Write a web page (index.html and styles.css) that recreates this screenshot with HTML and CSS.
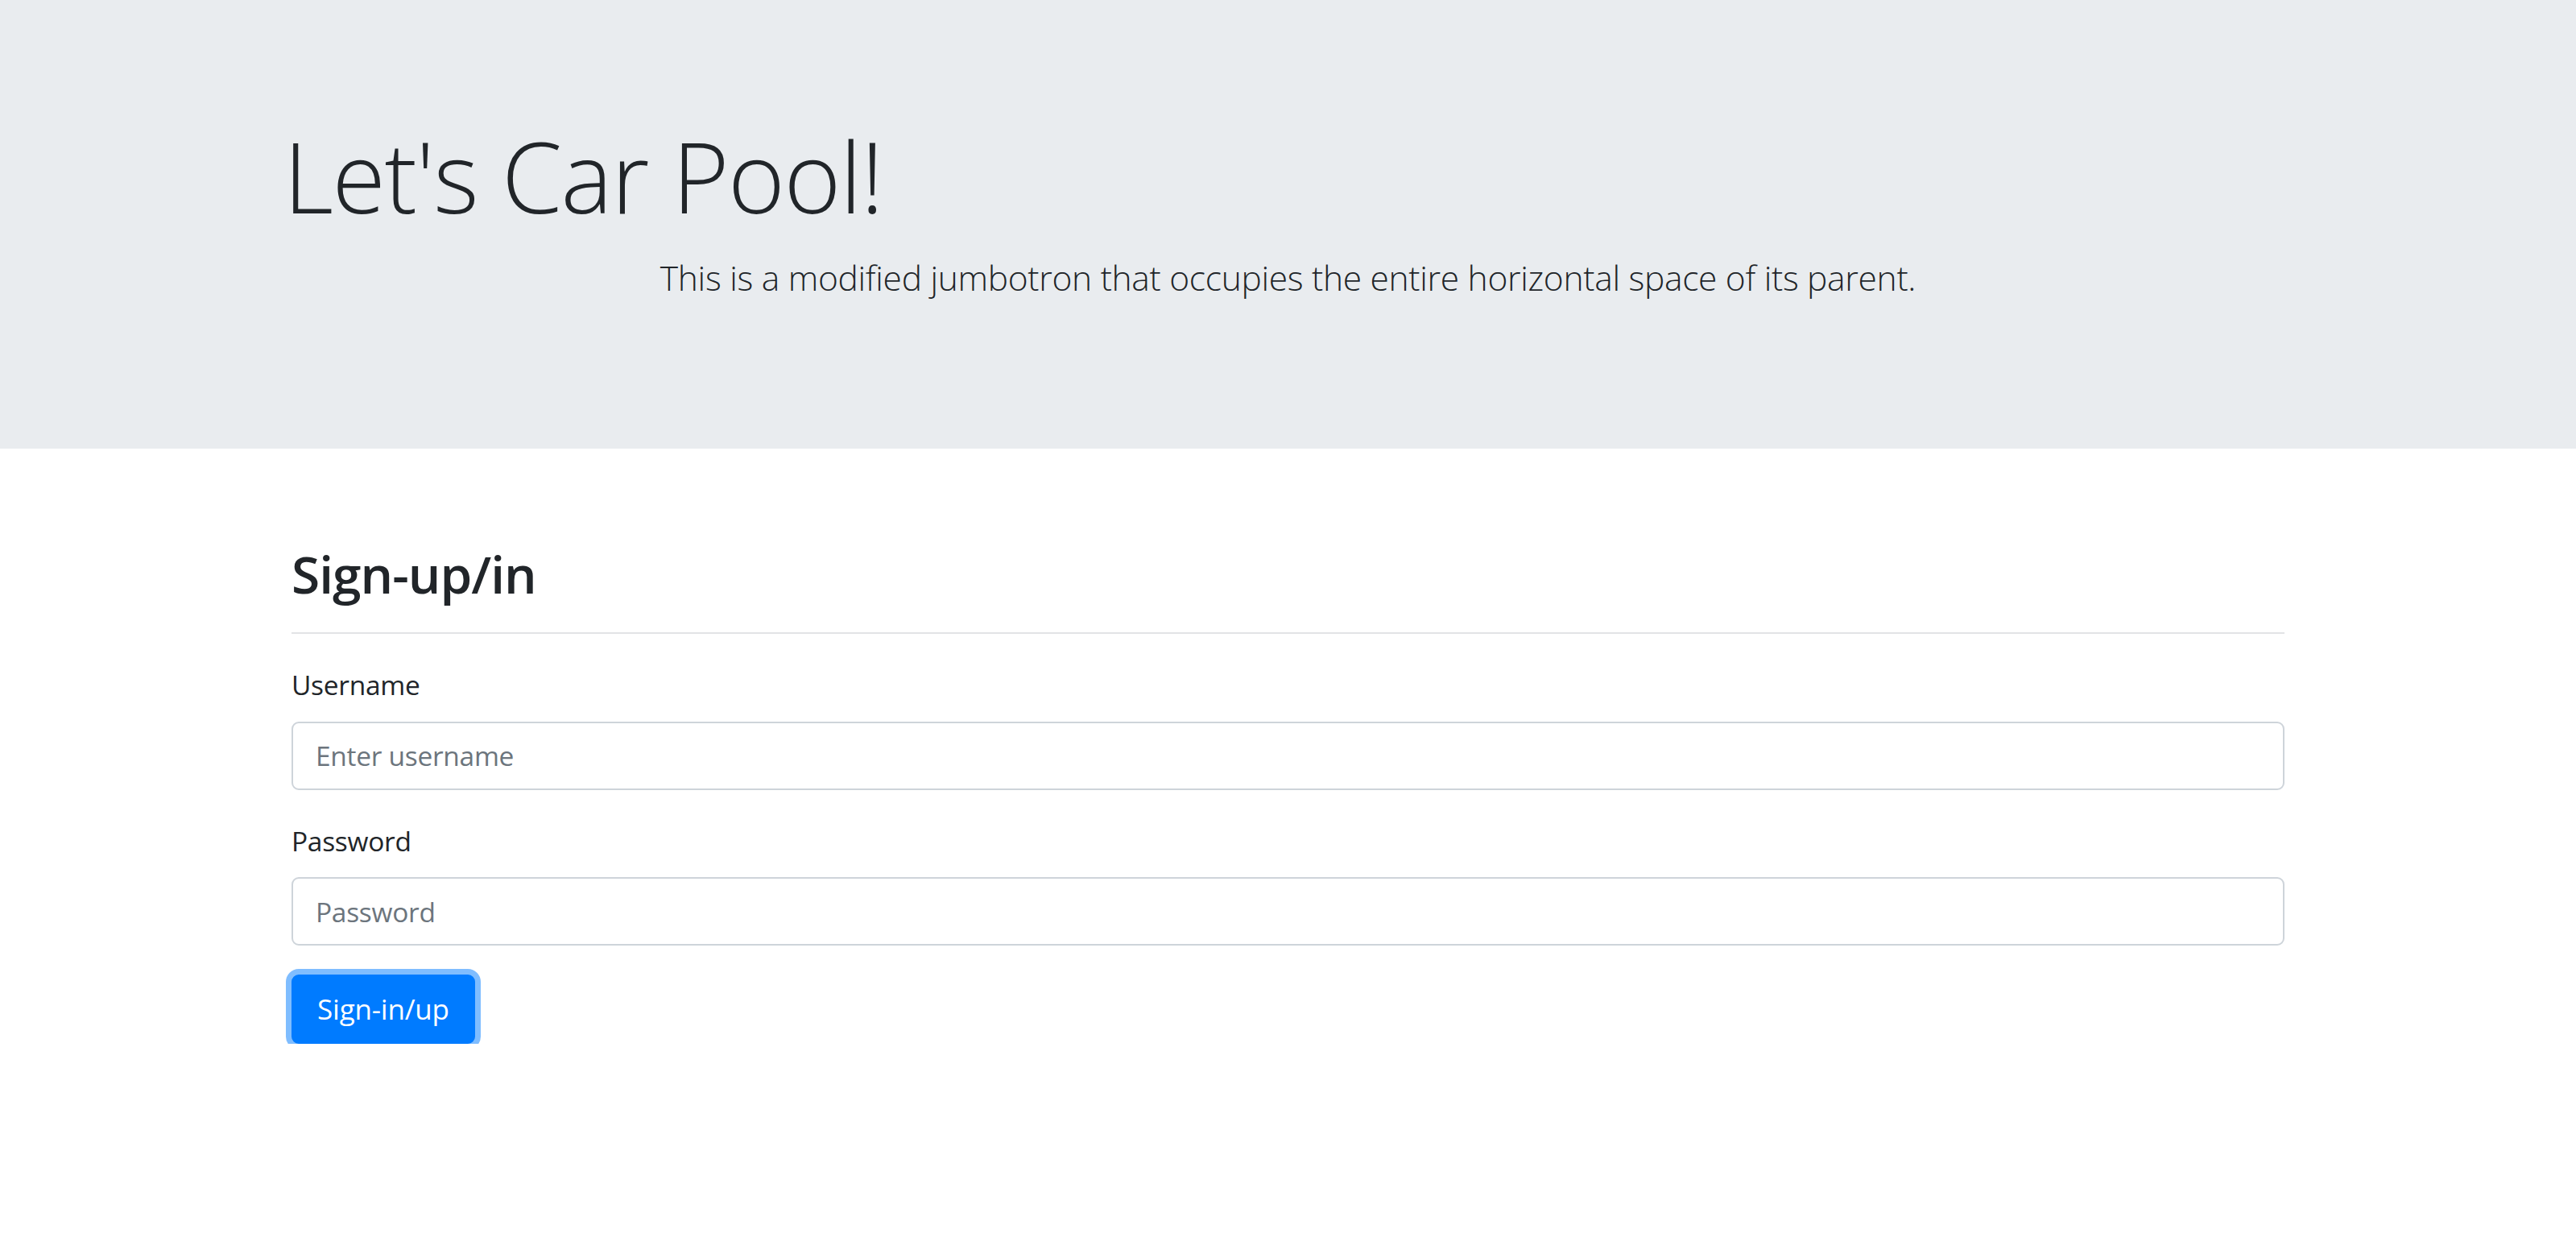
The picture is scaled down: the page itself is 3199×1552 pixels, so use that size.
FILE: index.html
```html
<!DOCTYPE html>
<html lang="en">
<head>
<meta charset="utf-8">
<title>Let's Car Pool!</title>
<link rel="stylesheet" href="styles.css">
</head>
<body>
<header class="jumbotron">
  <div class="container">
    <h1 class="display">Let's Car Pool!</h1>
    <p class="lead">This is a modified jumbotron that occupies the entire horizontal space of its parent.</p>
  </div>
</header>
<main class="container main">
  <h2 class="section-title">Sign-up/in</h2>
  <hr class="divider">
  <form class="form">
    <div class="form-group">
      <label class="form-label" for="username">Username</label>
      <input class="form-control" id="username" type="text" placeholder="Enter username">
    </div>
    <div class="form-group">
      <label class="form-label" for="password">Password</label>
      <input class="form-control" id="password" type="password" placeholder="Password">
    </div>
    <button class="btn" type="button">Sign-in/up</button>
  </form>
</main>
</body>
</html>
```
FILE: styles.css
```css
* { box-sizing: border-box; }

html, body {
  margin: 0;
  padding: 0;
  background: #ffffff;
}

body {
  font-family: "Open Sans", "Noto Sans", "Liberation Sans", sans-serif;
  font-size: 35.7px;
  line-height: 1.5;
  color: #212529;
}

.container {
  width: 2475px;
  margin: 0 auto;
}

.jumbotron {
  background: #e9ecef;
  padding: 143px 0;
  margin-bottom: 71px;
}

.display {
  margin: 0 0 18px -10px;
  font-size: 121px;
  font-weight: 300;
  line-height: 150px;
  letter-spacing: -1.5px;
}

.lead {
  margin: 0 0 36px;
  font-size: 42.5px;
  font-weight: 300;
  line-height: 67px;
  text-align: center;
  letter-spacing: -0.3px;
}

.main {
  padding-top: 49px;
}

.section-title {
  margin: 0;
  font-size: 64px;
  font-weight: 600;
  line-height: 72px;
  letter-spacing: -1px;
}

.divider {
  margin: 36px 0;
  border: 0;
  border-top: 2px solid #e2e3e5;
  height: 0;
}

.form-group {
  margin-bottom: 36px;
}

.form-label {
  display: inline-block;
  margin-bottom: 18px;
  font-size: 33.5px;
  line-height: 53.7px;
  letter-spacing: -0.3px;
}

.form-control {
  display: block;
  width: 100%;
  height: 85px;
  padding: 13px 28px;
  font-family: inherit;
  font-size: 33.5px;
  letter-spacing: -0.3px;
  color: #495057;
  background: #ffffff;
  border: 2px solid #ced4da;
  border-radius: 9px;
  outline: none;
}

.form-control::placeholder {
  color: #6c757d;
  opacity: 1;
}

.btn {
  display: inline-block;
  height: 86px;
  padding: 0 30px;
  font-family: inherit;
  font-size: 35px;
  letter-spacing: -0.2px;
  line-height: 1.5;
  color: #ffffff;
  background: #007bff;
  border: 2px solid #007bff;
  border-radius: 9px;
  box-shadow: 0 0 0 7px rgba(0, 123, 255, 0.5);
  cursor: pointer;
}
```
